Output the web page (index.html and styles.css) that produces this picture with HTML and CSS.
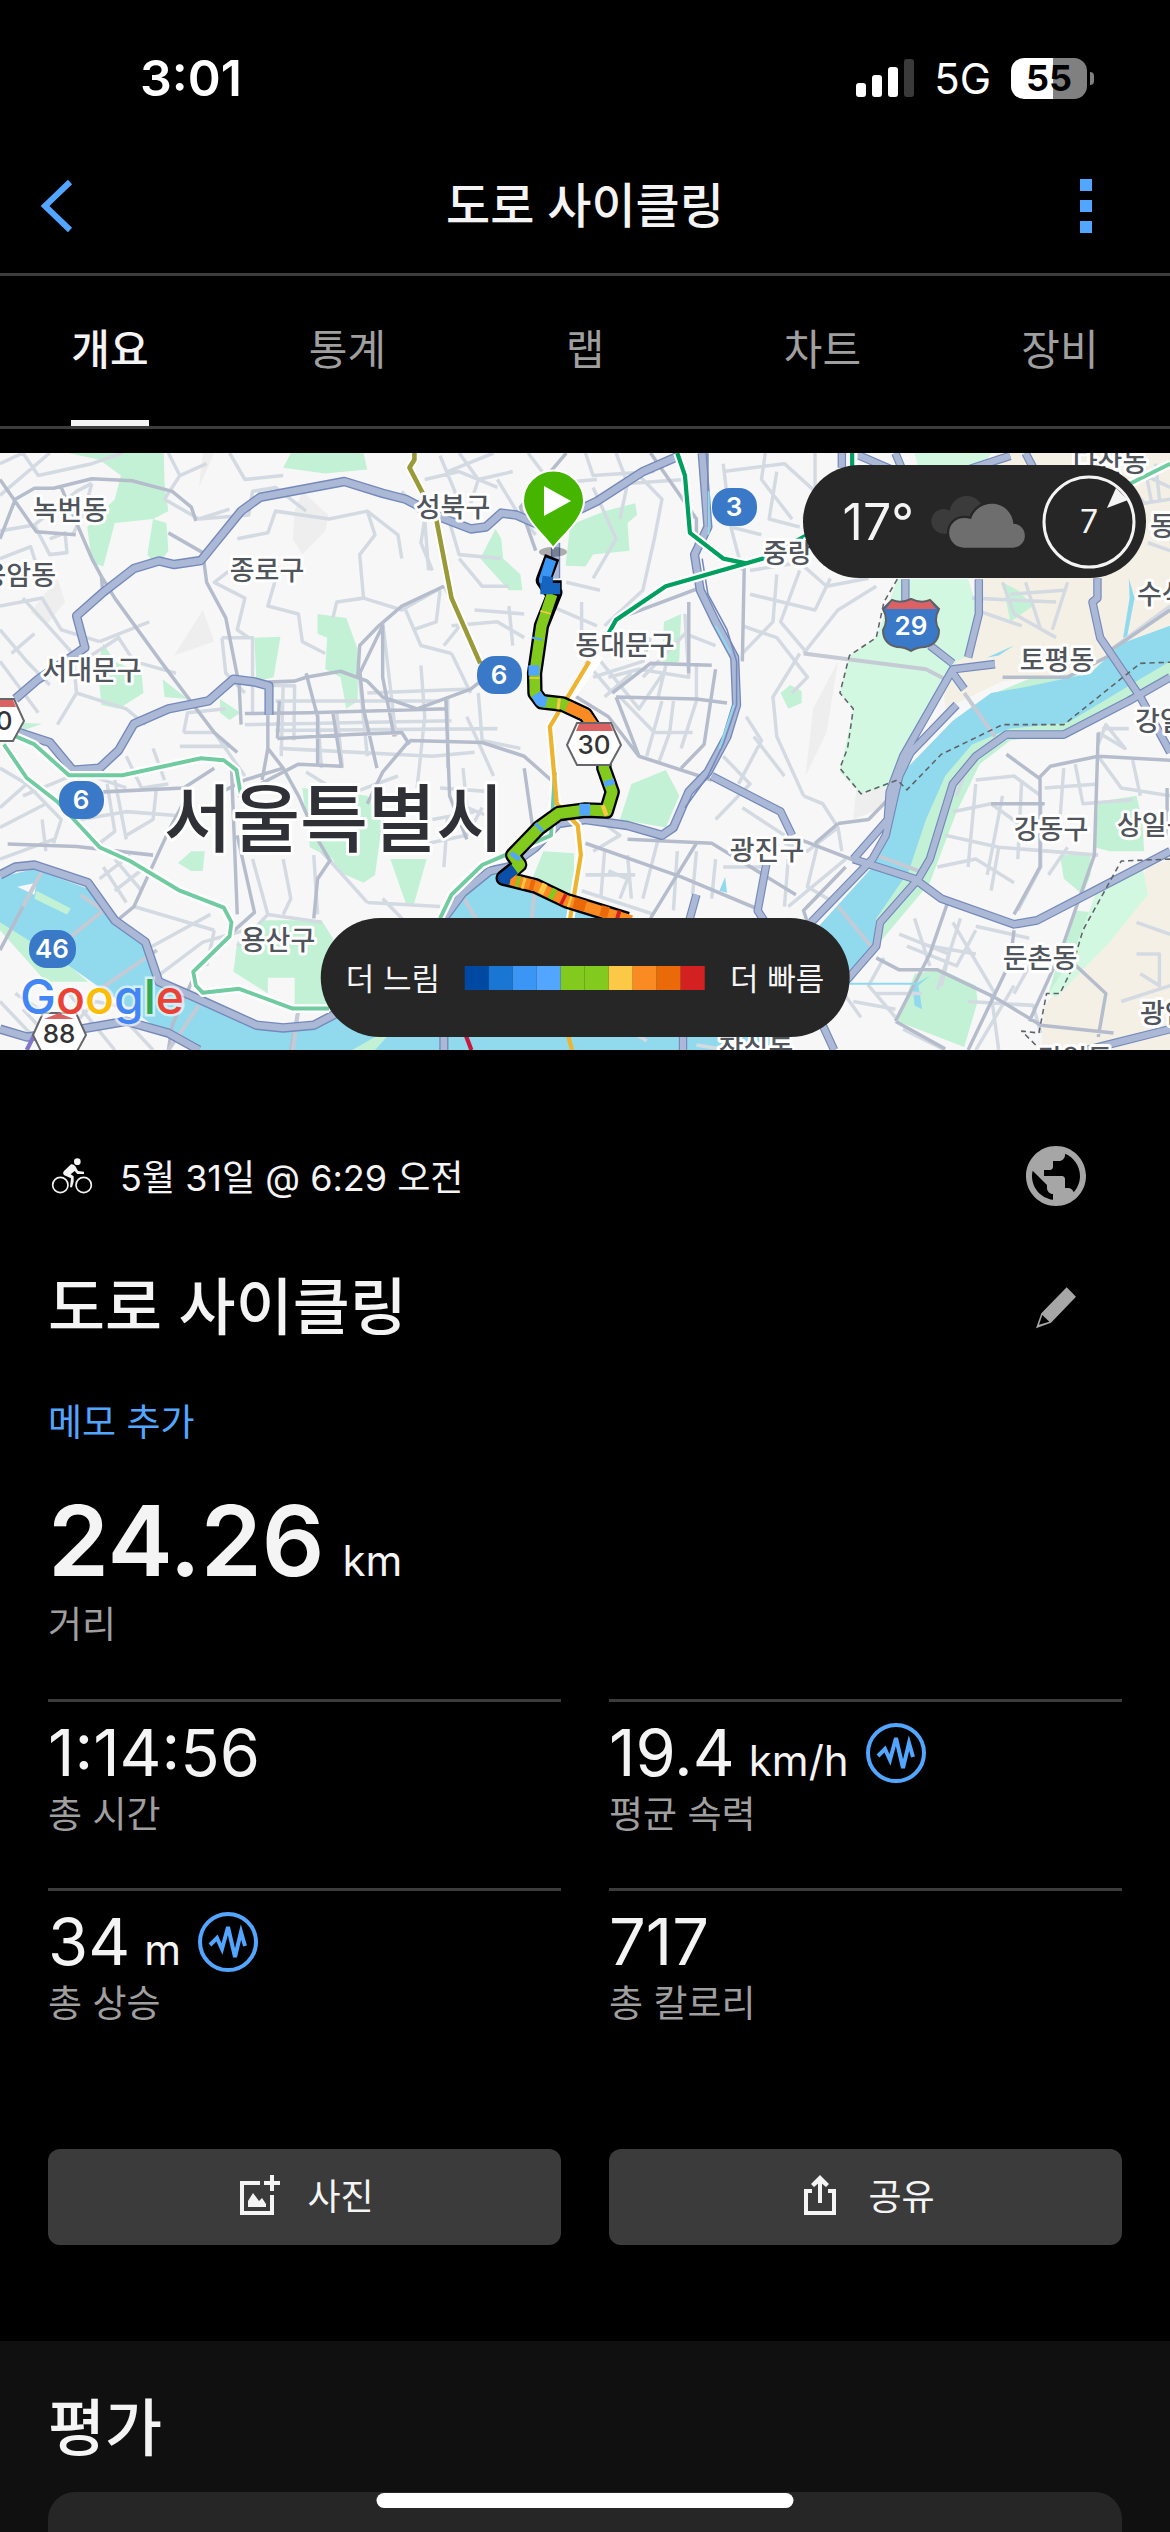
FILE: index.html
```html
<!DOCTYPE html>
<html lang="ko">
<head>
  <meta charset="UTF-8" />
  <meta name="viewport" content="width=device-width, initial-scale=1" />
  <title>도로 사이클링</title>
  <link rel="stylesheet" href="styles.css">
</head>
<body>
  <div class="status-bar">
    <span class="time">3:01</span>
    <div class="status-right">
      <svg class="signal" viewBox="0 0 58 38">
        <rect x="0" y="24" width="10" height="14" rx="3" fill="#fff"/>
        <rect x="16" y="16" width="10" height="22" rx="3" fill="#fff"/>
        <rect x="32" y="8" width="10" height="30" rx="3" fill="#fff"/>
        <rect x="48" y="0" width="10" height="38" rx="3" fill="#3a3a3a"/>
      </svg>
      <span class="network">5G</span>
      <div class="battery"><span class="battery-level">55</span></div>
    </div>
  </div>

  <header class="header">
    <button class="back" aria-label="뒤로">
      <svg viewBox="0 0 36 56"><path d="M31 4L6 28l25 24" fill="none" stroke="#52a6ff" stroke-width="6"/></svg>
    </button>
    <h2>도로 사이클링</h2>
    <button class="more" aria-label="더 보기">
      <svg viewBox="0 0 12 54" fill="#52a6ff"><path d="M0 0h12v12H0zM0 21h12v12H0zM0 42h12v12H0z"/></svg>
    </button>
  </header>

  <nav class="tabs">
    <a href="#" class="tab active">개요</a>
    <a href="#" class="tab">통계</a>
    <a href="#" class="tab">랩</a>
    <a href="#" class="tab">차트</a>
    <a href="#" class="tab">장비</a>
  </nav>

  <div class="map">
    <svg class="map-canvas" viewBox="0 0 1170 597" preserveAspectRatio="xMidYMid slice">
      <rect width="1170" height="597" fill="#f7f7f8"/>
      <g transform="scale(.38265 .39541) translate(0 -33)" fill="none" stroke-linejoin="round">

        <!-- land -->
        <g fill="#eeeeee">
          <path d="M790 130L858 190 850 230 790 290 765 250 770 180zM530 430L560 510 455 545zM150 350L170 410 120 470 80 435zM530 33H560L520 120z"/>
          <path d="M2190 560L2160 740 2105 850 2125 680zM2240 860L2340 890 2330 920 2230 960z"/>
        </g>
        <path fill="#f5f0e5" d="M2540 33H3058V480L2950 520 2850 590 2620 610 2470 680 2460 560 2560 430 2550 350 2600 33zM3000 1080L3058 1060V1543H2720L2730 1430 2810 1340 2900 1230z"/>
        <g fill="#c3f1d5">
          <path d="M178 33H428L430 110 440 180 400 200 435 210 440 280 410 320 385 290 400 200 300 210 270 320 240 310 228 220 300 150 316 90 260 50z"/>
          <path d="M740 70L760 33H950L960 75 850 85zM270 515L300 560 370 590 375 640 310 680 265 670 255 570zM665 500L733 498 715 600 670 610zM830 440L905 450 935 530 935 660 905 680 890 600 850 580 855 500 830 490z"/>
          <path d="M425 605L490 655 430 650zM575 655L628 690 600 708 575 690zM790 880L960 900 1000 960 980 1100 950 1120 880 1090 870 1060 810 1030zM1020 1060L1115 1060 1080 1180 1060 1170zM500 1040L535 1040 530 1090 500 1090 465 1070z"/>
          <path d="M690 1215H840L870 1260V1430H770V1360H700V1400L610 1345 620 1270zM1295 225L1310 250 1315 300 1360 340 1365 380 1330 380 1255 300zM1420 1040L1500 1045V1210H1350L1395 1100zM55 715L110 718 60 735z"/>
          <path d="M1490 215L1580 180 1660 160 1665 190 1640 210 1645 280 1550 290 1530 320 1478 318zM1735 460L1780 440 1775 560 1730 570zM2040 640L2065 620 2095 635 2095 665 2060 680zM1650 870L1740 835 1765 880 1775 900 1740 980 1620 960z"/>
          <path d="M2870 915L2970 900 2985 960 2990 1040 2900 1040 2860 1030zM2770 1050L2850 1045 2850 1100 2830 1150 2780 1110zM2390 1350L2460 1340 2550 1380 2555 1420 2520 1535 2345 1470zM2810 1190L2860 1195 2800 1330 2740 1400 2770 1300z"/>
          <path d="M2620 360L2640 460 2700 420 2660 380zM0 1205L100 1260 230 1370 120 1370 0 1240zM1800 1510H1900L1940 1543H1800z"/>
        </g>
        <path fill="#d3f8e2" d="M2345 352H2530L2560 440 2540 540 2500 560 2420 680 2345 870 2250 895 2195 840 2230 680 2195 640 2220 545 2290 500zM2390 33H2590L2560 80 2400 70zM2870 1130L2985 1075 3000 1150 2900 1270 2760 1410 2740 1400 2800 1310z"/>
        <path fill="#c3f1d5" d="M2330 1100L2420 900 2480 770 2600 640 2700 600 2840 590 3058 480V600L2800 740 2640 760 2560 820 2500 940 2430 1120 2300 1270 2220 1380z"/>
        <path fill="#91daee" d="M0 1105L90 1085 230 1135 300 1225 390 1290 420 1380 700 1490 830 1485 1000 1380 1150 1210 1280 1095 1500 1150 1800 1300 2130 1240 2280 1080 2320 1000 2360 840 2490 710 2590 640 2680 625 2850 590 2930 515 3058 470V560L2970 610 2790 715 2640 730 2540 770 2470 850 2420 960 2375 1090 2290 1210 2280 1290 2210 1350 2000 1543H520L400 1480 180 1330 0 1220z"/>
        <path fill="#c3f1d5" d="M95 1140L185 1185 175 1200 90 1160zM920 1543L980 1510 1020 1500 980 1543z"/>
        <path fill="#f7f7f8" d="M45 1130L95 1120 90 1150z"/>
        <path fill="#91daee" d="M2580 550L2650 520 2610 545zM1880 1140L1895 1105 1900 1145zM2385 1380L2430 1355 2400 1380 2410 1440 2390 1430zM2950 350L2965 400 2945 500 2935 500 2952 400z"/>

        <!-- minor streets -->
        <g stroke="#d4dae2" stroke-width="9">
          <path d="M0 60L60 33M0 140L130 33M60 33L100 90 240 60 320 33M0 230L90 215 200 130 240 110M90 215L130 290 175 285 170 235 130 250M240 110L220 180 190 240M440 33L470 90 540 60M470 90L430 150 520 200 600 175M520 200L650 190 660 130 720 120 800 180M600 33L640 100 740 90M620 250L700 235 720 180 860 200 960 180 1040 240 1050 300M640 300L560 360 640 400 620 480 650 500M730 320L700 420 780 440 790 510 850 540M960 180L980 240 940 290 950 400 880 410 870 450M1050 130L1110 200 1100 260 1130 330M0 300L80 270 100 330M0 420L110 400 160 480 260 510M0 480L70 560 130 620M60 400L190 540 200 640 150 720M260 510L390 460M200 640L330 680 380 720M30 540L90 490M0 560L100 690M230 550L310 500 350 560 460 590"/>
          <path d="M480 740H560L640 850M470 775H600M480 740L490 690 590 680M580 500H660V690M580 500L590 590 640 640M700 620L770 622 768 760M740 620L735 800M830 690L840 830M880 690L895 830M935 560L960 800M1000 460L1035 750M1100 570L1110 700 1090 880M1060 430L1100 520 1180 540M950 400L1050 430 1160 370M1160 370L1210 460 1160 520M720 660H1150M640 720L1180 710M720 735L1300 730M730 780L1130 800M1130 800L1240 790M960 640L1230 630M1170 650V830M1220 700L1290 850M1250 640L1260 760 1360 780M800 840L900 900 1040 850M1180 540L1230 640M1080 480L1140 460 1150 380"/>
          <path d="M0 830L70 870 0 930M70 870L160 960 140 1020M0 980L120 920M60 900L210 840 330 880M280 870L300 990 260 1020M210 960L330 940 460 950M330 800L370 880 440 870M400 780L430 860M300 860L330 1010M410 870L400 960 330 1000M120 1040L110 960M0 1060L140 1010M260 1110L340 1050M300 1140L380 1080M270 1080L330 1170M300 1060L370 1140M350 1180L560 1240M380 1290L550 1200M420 1350L530 1270 640 1240M560 1240L540 1330M660 1060L700 1200 840 1220M700 1200L620 1280M820 1050L830 1200M840 1040L960 1170M740 1060L760 1160 740 1200M1000 1160L1060 1220M960 1170L1150 1180M1120 1020L1220 1000 1260 930M1170 950L1160 1080M1210 830L1220 930 1300 960M1130 960L1240 940M1150 880L1290 890"/>
          <path d="M1150 40L1210 180M1110 100L1200 80 1300 120M1200 33L1250 100 1340 80M1170 80L1290 33M1250 100L1230 160M1160 160L1200 290 1310 300M1110 200L1120 330M1200 300L1260 370 1330 370M1300 100L1350 180 1400 240M1380 33L1440 110 1560 100M1330 420L1340 520M1240 430L1370 440M1180 470L1300 460 1370 500M1480 360L1568 380M1440 420L1560 470M1520 410V540"/>
          <path d="M40 1400L180 1490 250 1420 350 1440M60 1440L160 1543M0 1420L120 1543M180 1400L300 1543M240 1470L180 1543M330 1470L400 1543"/>
        </g>
        <g transform="translate(1490)" stroke="#d4dae2" stroke-width="9">
          <path d="M40 33L60 90 220 80M120 33L150 110 300 100M170 80L240 150 220 250M60 120L120 250 60 350M150 110L130 200M220 250L190 380 90 470M400 60L420 220 500 240M420 220L450 330M400 80L560 60 640 130M510 33L500 100 580 200M640 33V120L610 200M540 80L520 200 600 220M470 330L600 310 670 370 780 350M470 390L640 430 680 350M540 340L530 460 450 540M600 330L550 460 620 540M450 470L540 500 620 600 580 640M600 540L530 650 540 750 610 900M610 540L700 430 800 370M380 520L300 490 190 600M300 440L310 600 180 580 100 600M80 560L180 680 250 580M60 600L190 560 210 500M110 640L40 560M90 650L160 590M250 570L230 650M130 650L220 740 320 740M240 660L200 800M270 660L260 740 230 820M330 570V660L290 780"/>
          <path d="M60 950L130 1000 60 1040M400 800L470 870 380 960M460 700L500 760 440 870M450 930L560 1000M480 750L560 850M40 1100H170M90 1040L80 1160M30 1140L220 1200M150 1050L160 1160M100 1090L150 1110 130 1160M230 1010L190 1160M280 1040L270 1190M330 1040L320 1150M380 1060L370 1160M400 1080L500 1080M610 900L660 920 700 980 710 1040M700 980L620 1040 560 1020M570 1060L560 1180M650 1010L620 1130 690 1170M570 1180L720 1060M620 1180L700 1100"/>
          <path d="M1060 860L1160 850 1230 900M1000 940L1100 920 1200 990M1060 870L1040 1080M1130 900L1090 1100M980 1000L1120 1030 1380 1050M960 1080L1060 1060 1160 1120M1230 920V1080L1170 1190M1290 830L1280 960M1240 880L1380 870M1320 820L1340 920 1470 910M1180 860L1170 1060M1380 800L1440 880 1568 900M1380 770L1400 720 1450 780 1380 740M1390 730H1460M1470 810L1490 900M1010 900L1040 820M1120 1030L1100 1140M1250 1100L1300 1030M860 1250L990 1300 970 1380M900 1210L940 1330M880 1280L1010 1330 1060 1240M940 1280L1060 1300M1020 1210L960 1390M1060 1230L1200 1260M820 1310L780 1380 850 1460M800 1400L920 1400M740 1420L850 1440M760 1460L700 1380M1040 1420L1210 1430 1230 1500M1100 1400L1120 1543M1160 1380L1060 1543M1000 1220L1110 1400M1230 1280L1160 1400M870 1490L980 1543M1050 400L1270 410M1130 360L1160 440 1270 500M1190 360L1230 480M1060 430L1180 470M1150 390L1290 380M1300 360L1260 480M1450 100L1500 160 1568 150M1460 70L1568 120M1500 60L1520 160M1530 60L1540 150M1510 260L1568 280M1400 540L1568 420M1480 1220L1568 1250M1480 1300H1540V1380L1490 1350M1440 1420L1568 1380M10 1400L200 1520M330 1530L410 1543"/>
        </g>

        <!-- arterial roads -->
        <g stroke="#b5bccb" stroke-width="9">
          <path d="M0 100L95 232 198 240M0 250L40 150 90 122H140L240 98 345 103 450 130 500 170 512 205M160 120L240 300 265 345 268 380M265 345L300 400 420 560 560 740 620 790M440 235L530 285 540 360 590 450 625 620 630 720M1160 370L1050 420 990 470 940 520 935 600M1480 33L1360 170 1400 280"/>
          <path d="M935 600L1000 470 1000 600 1030 750M700 612L770 610 800 600 890 585 960 610 1000 650 1090 680 1230 630 1270 600M640 692L810 690 1170 680M725 755L920 745 1050 740 1070 770M730 660L725 755M800 590L830 700 830 820M940 580L950 680 985 830M870 690L892 825 780 820 620 900M700 690V780L740 830 780 900 830 1010 860 1060M700 780L685 860M740 830L640 860 560 900M1070 760L1260 765 1370 800 1440 860M1070 760L1000 840 960 920M1165 650L1175 900 1220 1010M1370 830L1395 1000M270 890L480 880 560 830M500 880L440 990 350 1180 300 1220M20 1022L200 1028 400 1050M605 830L620 1200M620 1000L665 1195 590 1260M820 1210L830 1110 865 1060"/>
          <path d="M0 1290L60 1180 110 1090M520 1330L450 1480 440 1543M780 1440L760 1543M270 1190L180 1260"/>
        </g>
        <g transform="translate(1490)" stroke="#b5bccb" stroke-width="9">
          <path d="M210 33L330 200 330 320M350 370L130 450M310 410L310 590M0 640L100 700 180 800 370 860M120 650L180 800M120 650L330 655 410 665M370 570L210 565 110 640M380 580L350 770 290 830M455 320L450 560M40 1020L290 1105 500 1190M150 1010L370 1020 590 1150M330 1020L210 1210M600 1010L760 1070M700 970L780 960 830 910M700 970L640 1020M620 1220L610 1190 720 1080M1140 795L1225 855 1255 825 1380 800 1568 810M1228 855V1080L1160 1200M1380 740L1370 1050 1280 1300M1100 920H1240M990 1160L940 1300 850 1470M800 1310L860 1340 960 1340 1110 1410 1230 1480 1420 1500M1160 1240L1150 1320 1040 1543M850 1470L980 1540M1280 1300L1200 1470M1300 1310L1400 1400 1380 1510M1130 600L1300 600 1420 540M1568 430L1400 540M1560 880V1000"/>
        </g>

        <!-- bridges -->
        <path stroke="#c5cad5" stroke-width="10" d="M270 1190L180 1260M110 1090L60 1180M210 1150L270 1190M410 1290L260 1390M520 1430L440 1543M780 1440L765 1543M1200 1140L1250 1220M1400 1110L1390 1210M2520 640L2600 750M2290 1050L2400 1090M2190 1180L2280 1285M2100 540L2420 580 2480 610"/>

        <!-- expressways: dark casing, then lighter fill -->
        <g stroke="#7589ba" stroke-width="24">
          <path d="M40 655L100 605 200 540 222 525 200 445 270 385 350 325 415 306 455 315 525 305 630 180 680 145 900 105 1000 135 1060 150 1150 195 1230 225 1270 220 1310 185 1350 190 1420 220 1560 155 1680 80 1770 42"/>
          <path d="M50 740L130 765 190 835 260 830 310 785 350 718 440 680 545 660 610 605 665 612 703 622V695"/>
          <path d="M0 1100L40 1080 90 1075 230 1120 300 1215 380 1270 415 1370 510 1410 670 1480 740 1487 820 1480 900 1440M0 1490L70 1510 150 1500 330 1470 440 1500 520 1543M1160 1210L1210 1145 1280 1090 1330 1080 1400 1030 1460 970 1530 960 1640 975 1730 1000 1760 980 1800 890 1850 840 1900 750 1925 670 1920 550 1870 460 1830 380 1815 290 1850 220 1835 33M1452 260V350M1160 1500V1543"/>
        </g>
        <g transform="translate(1490)" stroke="#7589ba" stroke-width="22">
          <path d="M370 850L550 940 580 1000M515 1060L490 1190 510 1220M330 1150L310 1220M630 1220L790 1060 825 1000 860 850 890 790 1010 670M740 1060L830 960 835 890 870 800 1000 580 1110 567M740 1060L900 1110 970 1160 1160 1225 1220 1215 1370 1140 1568 1040M710 1380L800 1280 810 1220 910 1110 940 1060 1000 870 1060 800 1140 745H1290L1460 660 1568 600M1378 350V400L1365 410 1385 500 1490 650 1568 790M876 352V480M940 520L1000 565M1000 590L1030 630M1068 352V440L1040 550M710 33V70M740 33L840 75M850 33L870 80M1040 75L1150 40M1190 33L1210 70M1350 1543L1568 1490M660 1480L690 1543M295 1500V1543"/>
        </g>
        <g stroke="#abb9d7" stroke-width="17">
          <path d="M40 655L100 605 200 540 222 525 200 445 270 385 350 325 415 306 455 315 525 305 630 180 680 145 900 105 1000 135 1060 150 1150 195 1230 225 1270 220 1310 185 1350 190 1420 220 1560 155 1680 80 1770 42"/>
          <path d="M50 740L130 765 190 835 260 830 310 785 350 718 440 680 545 660 610 605 665 612 703 622V695"/>
          <path d="M0 1100L40 1080 90 1075 230 1120 300 1215 380 1270 415 1370 510 1410 670 1480 740 1487 820 1480 900 1440M0 1490L70 1510 150 1500 330 1470 440 1500 520 1543M1160 1210L1210 1145 1280 1090 1330 1080 1400 1030 1460 970 1530 960 1640 975 1730 1000 1760 980 1800 890 1850 840 1900 750 1925 670 1920 550 1870 460 1830 380 1815 290 1850 220 1835 33M1452 260V350M1160 1500V1543"/>
        </g>
        <g transform="translate(1490)" stroke="#abb9d7" stroke-width="16">
          <path d="M370 850L550 940 580 1000M515 1060L490 1190 510 1220M330 1150L310 1220M630 1220L790 1060 825 1000 860 850 890 790 1010 670M740 1060L830 960 835 890 870 800 1000 580 1110 567M740 1060L900 1110 970 1160 1160 1225 1220 1215 1370 1140 1568 1040M710 1380L800 1280 810 1220 910 1110 940 1060 1000 870 1060 800 1140 745H1290L1460 660 1568 600M1378 350V400L1365 410 1385 500 1490 650 1568 790M876 352V480M940 520L1000 565M1000 590L1030 630M1068 352V440L1040 550M710 33V70M740 33L840 75M850 33L870 80M1040 75L1150 40M1190 33L1210 70M1350 1543L1568 1490M660 1480L690 1543M295 1500V1543"/>
        </g>
        <path stroke="#7589ba" stroke-width="4" d="M1850 33V220M1835 300L1850 390 1900 480 1925 560V670L1890 770 1850 850 1790 930"/>
        <path stroke="#91daee" stroke-width="5" d="M1852 130V240M1870 470L1910 540M1918 670L1880 780M2220 1375H2400"/>

        <!-- district border -->
        <path stroke="#5f6368" stroke-width="4" stroke-dasharray="14 10" d="M2345 352L2310 410 2290 500 2220 545 2195 640 2230 680 2215 780 2195 830 2250 895 2345 860 2370 885 2460 795 2620 720H2780L2980 565 3058 562M3058 1060L2930 1065 2830 1240 2800 1340 2770 1400H2735L2715 1500 2670 1495 2720 1543"/>

        <!-- subway lines -->
        <g stroke="#fff" stroke-width="22">
          <path d="M0 745L30 745 90 770 180 848H320L525 805 585 810 618 835 630 900M10 770L70 855 150 915 260 1030 340 1065 470 1140 585 1183 605 1220 600 1255 505 1345 512 1380 530 1398 625 1388 765 1438H860M1150 1210L1180 1150 1260 1075 1320 1050 1440 1000 1450 840"/>
          <path d="M1083 33V50L1070 70 1140 200 1180 400 1255 565M1568 545L1437 725 1455 920 1510 975 1518 1050 1490 1210M1770 33L1790 90 1803 235 1890 300 1950 312M2000 298L1740 370 1610 455 1590 490M2230 33V70M2950 112L3058 60"/>
        </g>
        <path stroke="#70cba0" stroke-width="10" d="M0 745L30 745 90 770 180 848H320L525 805 585 810 618 835 630 900M10 770L70 855 150 915 260 1030 340 1065 470 1140 585 1183 605 1220 600 1255 505 1345 512 1380 530 1398 625 1388 765 1438H860M1150 1210L1180 1150 1260 1075 1320 1050 1440 1000 1450 840M2950 112L3058 60"/>
        <path stroke="#9a9a38" stroke-width="12" d="M1083 33V50L1070 70 1140 200 1180 400 1255 565"/>
        <path stroke="#efb42f" stroke-width="11" d="M1540 560L1437 725 1455 920 1510 975 1518 1050 1490 1210M1483 1500L1495 1543"/>
        <path stroke="#009f5f" stroke-width="11" d="M1770 33L1790 90 1803 235 1890 300 1950 312M2110 240L2000 298 1740 370 1610 455 1590 490M2227 33V70"/>
        <path stroke="#c8193c" stroke-width="11" d="M1215 1500L1232 1543"/>
        <path stroke="#8276c8" stroke-width="11" d="M92 1500L70 1543"/>

        <!-- recorded ride -->
        <path stroke="#000" stroke-width="40" d="M1443 296L1420 355 1436 378 1450 385 1415 470 1397 590 1398 640 1415 662 1470 668 1530 695 1580 770 1578 830 1600 890 1585 938 1530 936 1460 945 1410 980 1370 1020 1340 1050 1358 1074 1315 1108 1400 1128 1480 1165 1640 1213M1426 375H1468"/>
        <g stroke-width="28">
          <path stroke="#82ca1e" d="M1443 390L1415 470 1397 590 1398 640 1415 662 1470 668 1530 695 1580 770 1578 830 1600 890 1585 938 1530 936 1460 945 1410 980 1370 1020 1340 1050 1358 1074 1335 1095"/>
          <path stroke="#3b95f5" d="M1440 302L1422 355 1436 374"/>
          <path stroke="#1565c0" d="M1412 376H1464M1432 345L1428 378"/>
          <path stroke="#52a6ff" d="M1395 570V596M1401 642L1412 660 1428 664M1404 500L1403 505M1412 977L1406 983M1528 920V950M1590 860L1594 874M1350 1048L1343 1058"/>
          <path stroke="#fbc945" d="M1456 667L1464 668M1397 600V604M1426 434L1425 438M1585 935L1575 939"/>
          <path stroke="#fa8b23" d="M1482 673L1530 695 1550 722M1330 1111L1400 1128 1480 1165 1650 1216"/>
          <path stroke="#0b4fa8" d="M1345 1085L1315 1108 1334 1112"/>
          <path stroke="#fbc945" d="M1365 1120L1372 1122M1412 1132L1425 1138M1486 1167L1492 1169"/>
          <path stroke="#82ca1e" d="M1350 1116L1358 1118M1438 1145L1450 1151"/>
          <path stroke="#ea6a0a" d="M1385 1124L1396 1127M1500 1170L1530 1179M1570 1190L1590 1196"/>
          <path stroke="#d32020" d="M1468 1160L1476 1164M1610 1202L1620 1205"/>
        </g>
      </g>

      <!-- place names -->
      <g class="places">
        <text x="70" y="67" text-anchor="middle">녹번동</text>
        <text x="56" y="132" text-anchor="end">응암동</text>
        <text x="267" y="127" text-anchor="middle">종로구</text>
        <text x="453" y="64" text-anchor="middle">성북구</text>
        <text x="92" y="227" text-anchor="middle">서대문구</text>
        <text x="625" y="202" text-anchor="middle">동대문구</text>
        <text x="763" y="110">중랑구</text>
        <text x="278" y="497" text-anchor="middle">용산구</text>
        <text x="1110" y="19" text-anchor="middle">다산동</text>
        <text x="1150" y="83">동</text>
        <text x="1137" y="151">수석동</text>
        <text x="1057" y="217" text-anchor="middle">토평동</text>
        <text x="1135" y="278">강일동</text>
        <text x="1051" y="386" text-anchor="middle">강동구</text>
        <text x="1117" y="382">상일동</text>
        <text x="767" y="407" text-anchor="middle">광진구</text>
        <text x="1040" y="515" text-anchor="middle">둔촌동</text>
        <text x="1140" y="570">광암동</text>
        <text x="756" y="606" text-anchor="middle">잠실동</text>
        <text x="1075" y="616" text-anchor="middle">감일동</text>
        <text class="city" x="334" y="393" text-anchor="middle">서울특별시</text>
      </g>

      <!-- route shields -->
      <g class="shields" text-anchor="middle">
        <rect x="477" y="203" width="45" height="38" rx="18"/><text x="499" y="231">6</text>
        <rect x="59" y="328" width="45" height="38" rx="18"/><text x="81" y="356">6</text>
        <rect x="29" y="477" width="47" height="38" rx="18"/><text x="52" y="505">46</text>
        <rect x="712" y="35" width="45" height="38" rx="18"/><text x="734" y="63">3</text>
        <path stroke="#5e6066" stroke-width="2" d="M892 147q9 4 19-1 10 5 19 1l9 9q-6 11 0 21 0 14-14 17-8 0-14 4-6-4-14-4-14-3-14-17 6-10 0-21z"/>
        <path fill="#db6162" d="M892 148q9 4 19-1 10 5 19 1l6 8h-50z"/>
        <text x="911" y="182">29</text>
      </g>
      <g class="hex" text-anchor="middle">
        <path d="M577 270h34l10 22-11 20h-33l-10-20z"/><path class="cap" d="M579 271h31l3 7h-37z"/><text x="594" y="301">30</text>
        <path d="M-20 246h34l10 22-11 20h-33l-10-20z"/><path class="cap" d="M-20 247h33l3 7h-36z"/><text x="-3" y="277">70</text>
        <path d="M43 560h33l10 22-11 20h-32l-10-20z"/><path class="cap" d="M44 566l15-6 15 6z"/><text x="59" y="590">88</text>
      </g>

      <text class="google" x="20" y="561"><tspan fill="#4285f4">G</tspan><tspan fill="#ea4335">o</tspan><tspan fill="#fbbc04">o</tspan><tspan fill="#4285f4">g</tspan><tspan fill="#34a853">l</tspan><tspan fill="#ea4335">e</tspan></text>

      <!-- start pin -->
      <ellipse cx="553" cy="99" rx="14" ry="5" fill="#000" opacity=".3"/>
      <path fill="#45b500" stroke="#fff" stroke-width="2" d="M553 95C545 83 523 66 523 48a30 30 0 0 1 61 0C584 66 562 83 553 95z"/>
      <path fill="#fff" d="M544 33l27 15-27 15z"/>
    </svg>

    <div class="weather">
      <span class="temp">17°</span>
      <svg class="cloud" viewBox="450 165 288 162">
        <g fill="#3b3b3b"><circle cx="491" cy="244" r="37"/><circle cx="560" cy="219" r="51"/><path d="M491 281h60v-60h-60z"/></g>
        <g fill="#6e6e6e" stroke="#262626" stroke-width="14" paint-order="stroke">
          <path d="M552 323a44 44 0 0 1 0-89q12 0 21 3a65 65 0 0 1 127 14 36 36 0 0 1-3 72z"/>
        </g>
      </svg>
      <svg class="wind" viewBox="0 0 94 94">
        <circle cx="47" cy="47" r="45" fill="none" stroke="#f4f4f4" stroke-width="3"/>
        <path fill="#f4f4f4" d="M74 13l12 12-21 8z"/>
        <text x="47" y="58" text-anchor="middle">7</text>
      </svg>
    </div>

    <div class="legend">
      <span>더 느림</span>
      <div class="scale">
        <i class="s1"></i><i class="s2"></i><i class="s3"></i><i class="s4"></i><i class="s5"></i><i class="s5"></i><i class="s6"></i><i class="s7"></i><i class="s8"></i><i class="s9"></i>
      </div>
      <span>더 빠름</span>
    </div>
  </div>

  <main class="activity">
    <div class="row date-row">
      <svg class="bike" viewBox="60 76 132 120">
        <g fill="none" stroke="#f4f4f4" stroke-width="5"><circle cx="91" cy="163" r="23"/><circle cx="161" cy="163" r="23"/></g>
        <circle cx="142" cy="93" r="10" fill="#f4f4f4"/>
        <path fill="#f4f4f4" d="M123 101q7-2 13 6l8 14 18 2v7h-20l-8-9-12 10 9 6v16l-5 17h-6l3-27-20-9q-7-6-1-13z"/>
      </svg>
      <span class="date">5월 31일 @ 6:29 오전</span>
      <button class="icon-btn" aria-label="공개 설정">
        <svg class="globe" viewBox="0 0 24 24" fill="#a6a6a6"><path d="M12 2C6.48 2 2 6.48 2 12s4.48 10 10 10 10-4.48 10-10S17.52 2 12 2zm-1 17.93c-3.95-.49-7-3.85-7-7.93 0-.62.08-1.21.21-1.79L9 15v1c0 1.1.9 2 2 2v1.93zm6.9-2.54c-.26-.81-1-1.39-1.9-1.39h-1v-3c0-.55-.45-1-1-1H8v-2h2c.55 0 1-.45 1-1V7h2c1.1 0 2-.9 2-2v-.41c2.93 1.19 5 4.06 5 7.41 0 2.08-.8 3.97-2.1 5.39z"/></svg>
      </button>
    </div>

    <div class="row title-row">
      <h1>도로 사이클링</h1>
      <button class="icon-btn" aria-label="이름 편집">
        <svg class="pencil" viewBox="96 464 144 144" fill="#a6a6a6"><path fill-rule="evenodd" d="M200 474l28 28-75 78-45 17 16-45zM127 557l-10 29 31-9z"/></svg>
      </button>
    </div>

    <a href="#" class="memo">메모 추가</a>

    <div class="distance">
      <div class="big">24.26 <small>km</small></div>
      <div class="label">거리</div>
    </div>

    <div class="stats">
      <div class="stat">
        <div class="value">1:14:56</div>
        <div class="label">총 시간</div>
      </div>
      <div class="stat">
        <div class="value">19.4 <small>km/h</small>
          <svg class="wave" viewBox="-30 -30 60 60"><circle r="28"/><path d="M-18 3l7-7 5 11 6-22 7 30 6-25 4 14"/></svg>
        </div>
        <div class="label">평균 속력</div>
      </div>
      <div class="stat">
        <div class="value">34 <small>m</small>
          <svg class="wave" viewBox="-30 -30 60 60"><circle r="28"/><path d="M-18 3l7-7 5 11 6-22 7 30 6-25 4 14"/></svg>
        </div>
        <div class="label">총 상승</div>
      </div>
      <div class="stat">
        <div class="value">717</div>
        <div class="label">총 칼로리</div>
      </div>
    </div>

    <div class="actions">
      <button class="action">
        <svg viewBox="0 0 48 48"><path d="M25 10H7v30h30V22M29 10h16M37 2v16" fill="none" stroke="#f4f4f4" stroke-width="4"/><path fill="#f4f4f4" d="M13 34v-6l5-8 6 8 3-3 4 6v3z"/></svg>
        사진
      </button>
      <button class="action">
        <svg viewBox="0 0 48 48"><path d="M16 18h-6v22h28V18h-6M24 30V8" fill="none" stroke="#f4f4f4" stroke-width="4"/><path fill="#f4f4f4" d="M24 2l9 9-3 3-6-5-6 5-3-3z"/></svg>
        공유
      </button>
    </div>
  </main>

  <section class="review">
    <h1>평가</h1>
    <div class="review-card"></div>
  </section>

  <div class="home-indicator"></div>
</body>
</html>
```

FILE: styles.css
```css
* {
  box-sizing: border-box;
}

body {
  margin: 0;
  min-height: 100vh;
  display: flex;
  flex-direction: column;
  background-color: #000;
  color: #f4f4f4;
  font-family: "Inter", "Noto Sans CJK KR", sans-serif;
}

h1, h2 {
  margin: 0;
  font-weight: 500;
}

button {
  display: flex;
  align-items: center;
  justify-content: center;
  padding: 0;
  border: none;
  background: none;
  color: inherit;
  font-family: inherit;
}

a {
  text-decoration: none;
}

/* status bar */
.status-bar {
  display: flex;
  align-items: center;
  justify-content: space-between;
  height: 138px;
  padding: 18px 79px 0 140px;
  color: #fff;
}

.time {
  font-size: 50px;
  font-weight: 600;
}

.status-right {
  display: flex;
  align-items: center;
}

.signal {
  width: 58px;
  height: 38px;
}

.network {
  margin: 0 20px;
  font-size: 42px;
}

.battery {
  position: relative;
  width: 76px;
  height: 41px;
  margin-right: 4px;
  border-radius: 13px;
  background: linear-gradient(90deg, #fff 55%, #808080 55%);
  color: #000;
  text-align: center;
}

.battery::after {
  content: "";
  position: absolute;
  right: -7px;
  top: 14px;
  width: 4px;
  height: 13px;
  border-radius: 0 4px 4px 0;
  background: #808080;
}

.battery-level {
  font-size: 36px;
  font-weight: 700;
  line-height: 41px;
}

/* title bar */
.header {
  display: flex;
  align-items: center;
  justify-content: space-between;
  height: 138px;
  padding: 0 78px 0 39px;
  border-bottom: 3px solid #3c3c3c;
}

.header h2 {
  font-size: 48px;
  line-height: 60px;
}

.back {
  width: 51px;
  justify-content: flex-start;
}

.back svg {
  width: 36px;
  height: 56px;
}

.more {
  width: 12px;
}

.more svg {
  width: 12px;
  height: 54px;
}

.tabs {
  display: flex;
  justify-content: space-between;
  height: 153px;
  padding: 0 71px;
  border-bottom: 3px solid #3c3c3c;
}

.tab {
  min-width: 78px;
  border-bottom: 6px solid transparent;
  color: #9f9f9f;
  font-size: 42px;
  line-height: 148px;
  height: 150px;
  text-align: center;
}

.tab.active {
  border-color: #f4f4f4;
  color: #f4f4f4;
  font-weight: 500;
}

/* map */
.map {
  position: relative;
  margin-top: 24px;
}

.map-canvas {
  display: block;
  width: 100%;
  height: 597px;
}

.places text {
  fill: #50545b;
  stroke: #fff;
  stroke-width: 6px;
  stroke-linejoin: round;
  paint-order: stroke;
  font-size: 27px;
  font-weight: 500;
}

.places .city {
  fill: #2f3136;
  font-size: 74px;
  font-weight: 500;
}

.shields {
  fill: #3a78c8;
}

.shields text {
  fill: #fff;
  font-size: 26px;
  font-weight: 600;
}

.hex path {
  fill: #fff;
  stroke: #65666a;
  stroke-width: 2px;
}

.hex .cap {
  fill: #db6162;
  stroke: none;
}

.hex text {
  fill: #333;
  font-size: 26px;
  font-weight: 500;
}

.google {
  stroke: rgba(255, 255, 255, 0.6);
  stroke-width: 5px;
  paint-order: stroke;
  font-size: 48px;
  font-weight: 500;
}

.weather {
  position: absolute;
  top: 12px;
  right: 24px;
  display: flex;
  align-items: center;
  gap: 16px;
  height: 113px;
  padding: 0 10px 0 40px;
  border-radius: 57px;
  background-color: #262626;
}

.temp {
  font-size: 50px;
}

.cloud {
  width: 96px;
  height: 54px;
}

.wind {
  width: 94px;
  height: 94px;
}

.wind text {
  fill: #f4f4f4;
  font-size: 32px;
}

.legend {
  position: absolute;
  left: 50%;
  bottom: 13px;
  transform: translateX(-50%);
  display: flex;
  align-items: center;
  gap: 25px;
  height: 119px;
  padding: 0 25px;
  border-radius: 60px;
  background-color: #262626;
  font-size: 31px;
  white-space: nowrap;
}

.legend span {
  padding-bottom: 3px;
}

.scale {
  display: flex;
}

.scale i {
  width: 24px;
  height: 24px;
}

.s1 { background: #0049a3; }
.s2 { background: #1976d2; }
.s3 { background: #3b95f5; }
.s4 { background: #52a6ff; }
.s5 { background: #82ca1e; }
.s6 { background: #fbc945; }
.s7 { background: #fa8b23; }
.s8 { background: #ea6a0a; }
.s9 { background: #d32020; }

/* activity summary */
.activity {
  padding: 90px 48px 96px;
}

.row {
  display: flex;
  align-items: center;
  padding-right: 30px;
}

.date-row {
  height: 72px;
}

.bike {
  width: 44px;
  height: 40px;
  margin: 0 26px 0 2px;
}

.date {
  padding-bottom: 3px;
  font-size: 36px;
}

.icon-btn {
  width: 72px;
  height: 72px;
  margin-left: auto;
}

.globe {
  width: 72px;
  height: 72px;
}

.pencil {
  width: 48px;
  height: 48px;
}

.title-row {
  height: 96px;
  margin-top: 48px;
}

h1 {
  font-size: 62px;
  line-height: 84px;
}

.memo {
  display: block;
  margin-top: 43px;
  color: #52a6ff;
  font-size: 37px;
  line-height: 48px;
}

.distance {
  margin-top: 42px;
}

.big {
  display: flex;
  align-items: baseline;
  gap: 18px;
  height: 104px;
  font-size: 98px;
  font-weight: 600;
  line-height: 104px;
}

small {
  font-size: 42px;
  font-weight: 400;
}

.label {
  margin-top: 8px;
  color: #9f9f9f;
  font-size: 37px;
  line-height: 48px;
}

.stats {
  display: grid;
  grid-template-columns: 1fr 1fr;
  column-gap: 48px;
  margin-top: 50px;
}

.stat {
  padding: 21px 0 49px;
  border-top: 3px solid #3c3c3c;
}

.value {
  display: flex;
  align-items: baseline;
  gap: 14px;
  height: 60px;
  font-size: 65px;
  line-height: 60px;
}

.wave {
  width: 60px;
  height: 60px;
  margin-left: 3px;
  align-self: center;
  fill: none;
  stroke: #52a6ff;
  stroke-width: 4px;
}

.actions {
  display: grid;
  grid-template-columns: 1fr 1fr;
  gap: 48px;
  margin-top: 72px;
}

.action {
  gap: 24px;
  height: 96px;
  border-radius: 12px;
  background-color: #3b3b3b;
  font-size: 36px;
  line-height: 48px;
}

.action svg {
  width: 48px;
  height: 48px;
}

/* review */
.review {
  flex: 1;
  display: flex;
  flex-direction: column;
  padding: 46px 48px 0;
  background-color: #101010;
}

.review-card {
  flex: 1;
  min-height: 38px;
  margin-top: 21px;
  border-radius: 27px 27px 0 0;
  background-color: #262626;
}

.home-indicator {
  position: fixed;
  left: 50%;
  bottom: 24px;
  width: 417px;
  height: 15px;
  transform: translateX(-50%);
  border-radius: 8px;
  background-color: #fff;
}
```
